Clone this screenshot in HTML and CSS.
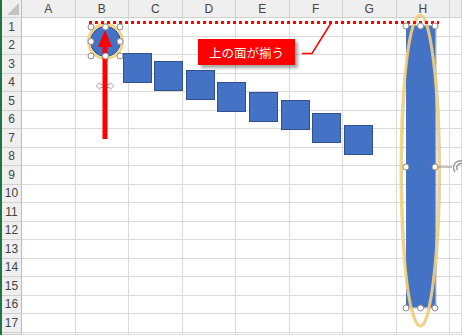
FILE: index.html
```html
<!DOCTYPE html>
<html lang="ja">
<head>
    <meta charset="UTF-8">
    <title>上の面が揃う</title>
    <link rel="stylesheet" href="styles.css">
</head>
<body>

    <div class="window">
        <div class="edge"></div>
        <div class="sheet" id="sheet"></div>

        <svg class="drawing" width="462" height="335" viewBox="0 0 462 335">
            <!-- squares stepping down -->
            <g class="box">
                <rect x="123.5" y="53.5" width="28" height="29"/>
                <rect x="154.5" y="61.5" width="28" height="29"/>
                <rect x="186.5" y="70.5" width="28" height="29"/>
                <rect x="217.5" y="82.5" width="28" height="29"/>
                <rect x="249.5" y="92.5" width="28" height="29"/>
                <rect x="281.5" y="100.5" width="28" height="29"/>
                <rect x="312.5" y="113.5" width="28" height="29"/>
                <rect x="344.5" y="125.5" width="28" height="29"/>
            </g>

            <!-- tall shape in column H -->
            <rect class="tall-shadow" x="408" y="27" width="29" height="282"/>
            <rect class="tall" x="406" y="25.5" width="29.5" height="282"/>
            <ellipse class="glow-shade" cx="421" cy="171" rx="19" ry="155"/>
            <ellipse class="glow" cx="420" cy="170.5" rx="19" ry="155.5"/>

            <!-- small circle in B1 -->
            <circle class="glow" cx="105.5" cy="41.5" r="17"/>
            <circle class="dot" cx="105.5" cy="41.5" r="15"/>

            <!-- dotted guide -->
            <line class="guide" x1="89" y1="22.5" x2="439" y2="22.5"/>

            <!-- callout leader -->
            <polyline class="leader" points="302,53.5 312,53.5 331,23"/>

            <!-- move cursor, under the arrow -->
            <g class="cursor">
                <path class="faint" d="M105 78 L105 93"/>
                <path d="M96 86 L100 82.5 L100 84.5 L104 84.5 L104 87.5 L100 87.5 L100 89.5 Z"/>
                <path d="M114 86 L110 82.5 L110 84.5 L106 84.5 L106 87.5 L110 87.5 L110 89.5 Z"/>
            </g>

            <!-- arrow -->
            <rect class="arrow" x="102.5" y="45" width="5" height="94"/>
            <polygon class="arrow" points="98,47 105,30 112,47"/>

            <!-- handles -->
            <g class="handle">
                <circle cx="91" cy="27" r="3"/>
                <circle cx="105.5" cy="27" r="3"/>
                <circle cx="120" cy="27" r="3"/>
                <circle cx="91" cy="41.5" r="3"/>
                <circle cx="120" cy="41.5" r="3"/>
                <circle cx="91" cy="56" r="3"/>
                <circle cx="105.5" cy="56" r="3"/>
                <circle cx="120" cy="56" r="3"/>

                <circle cx="406" cy="26" r="3"/>
                <circle cx="420.5" cy="26" r="3"/>
                <circle cx="435" cy="26" r="3"/>
                <circle cx="406" cy="167" r="3"/>
                <circle cx="435" cy="167" r="3"/>
                <circle cx="406" cy="308" r="3"/>
                <circle cx="420.5" cy="308" r="3"/>
                <circle cx="435" cy="308" r="3"/>
            </g>

            <!-- rotate handle -->
            <line class="rot-line" x1="438" y1="167" x2="452" y2="167"/>
            <path class="rot" d="M455 172 A7 7 0 1 1 466 172"/>
            <path class="rot" d="M457.5 170 A4 4 0 1 1 464 170"/>
        </svg>

        <div class="callout">上の面が揃う</div>
    </div>

    <script>
        const sheet = document.getElementById('sheet');
        const cols = ['A', 'B', 'C', 'D', 'E', 'F', 'G', 'H', ''];

        function cell(cls, text) {
            const div = document.createElement('div');
            div.className = cls;
            div.textContent = text || '';
            sheet.appendChild(div);
        }

        cell('cell head corner');
        cols.forEach(c => cell('cell head', c));

        for (let r = 1; r <= 18; r++) {
            cell('cell head rownum', r <= 17 ? r : '');
            cols.forEach(() => cell('cell'));
        }
    </script>

</body>
</html>
```

FILE: styles.css
```css
* {
    box-sizing: border-box;
}
body {
    margin: 0;
    background: #fff;
    font-family: "Liberation Sans", Arial, sans-serif;
}
.window {
    position: relative;
    display: flex;
    width: 462px;
    height: 335px;
    overflow: hidden;
}
.edge {
    width: 2px;
    background: #217346;
}
.sheet {
    flex: 1;
    display: grid;
    grid-template-columns: 20px repeat(8, 53.5px) 1fr;
    grid-template-rows: 18px repeat(17, 18.5px) 1fr;
}
.cell {
    border-right: 1px solid #dadada;
    border-bottom: 1px solid #dadada;
}
.head {
    display: flex;
    align-items: center;
    justify-content: center;
    background: #efefef;
    color: #444;
    font-size: 12px;
    border-color: #d0d0d0;
}
.rownum {
    border-right-color: #bcbcbc;
}
.corner {
    position: relative;
    border-right-color: #bcbcbc;
}
.corner::after {
    content: "";
    position: absolute;
    right: 2px;
    bottom: 2px;
    width: 12px;
    height: 12px;
    background: #c3c3c3;
    clip-path: polygon(100% 0, 100% 100%, 0 100%);
}

/* shapes on top of the grid */
.drawing {
    position: absolute;
    top: 0;
    left: 0;
}
.box rect, .dot {
    fill: #4472c4;
    stroke: #2f528f;
    stroke-width: 1;
}
.tall {
    fill: #4472c4;
}
.tall-shadow {
    fill: #9a9a9a;
    opacity: 0.35;
}
.glow {
    fill: none;
    stroke: #f4d27c;
    stroke-width: 3;
    opacity: 0.9;
}
.glow-shade {
    fill: none;
    stroke: #8a8a8a;
    stroke-width: 2;
    opacity: 0.4;
}
.guide {
    stroke: #ff0000;
    stroke-width: 3;
    stroke-dasharray: 3 3;
}
.leader {
    fill: none;
    stroke: #ff0000;
    stroke-width: 1.5;
}
.arrow {
    fill: #ff0000;
}
.cursor path {
    fill: #fff;
    stroke: #b4b4b4;
    stroke-width: 1;
}
.cursor .faint {
    stroke: #d8d8d8;
}
.handle circle {
    fill: #fff;
    stroke: #8c8c8c;
    stroke-width: 1;
}
.rot-line {
    stroke: #8c8c8c;
    stroke-width: 1;
}
.rot {
    fill: none;
    stroke: #9a9a9a;
    stroke-width: 1.5;
}

.callout {
    position: absolute;
    left: 198px;
    top: 39px;
    width: 97px;
    height: 26px;
    display: flex;
    align-items: center;
    justify-content: center;
    background: #ff0000;
    color: #fff;
    font-family: "Noto Sans CJK JP", sans-serif;
    font-size: 12.5px;
    box-shadow: 3px 3px 3px rgba(0, 0, 0, 0.35);
}
```
